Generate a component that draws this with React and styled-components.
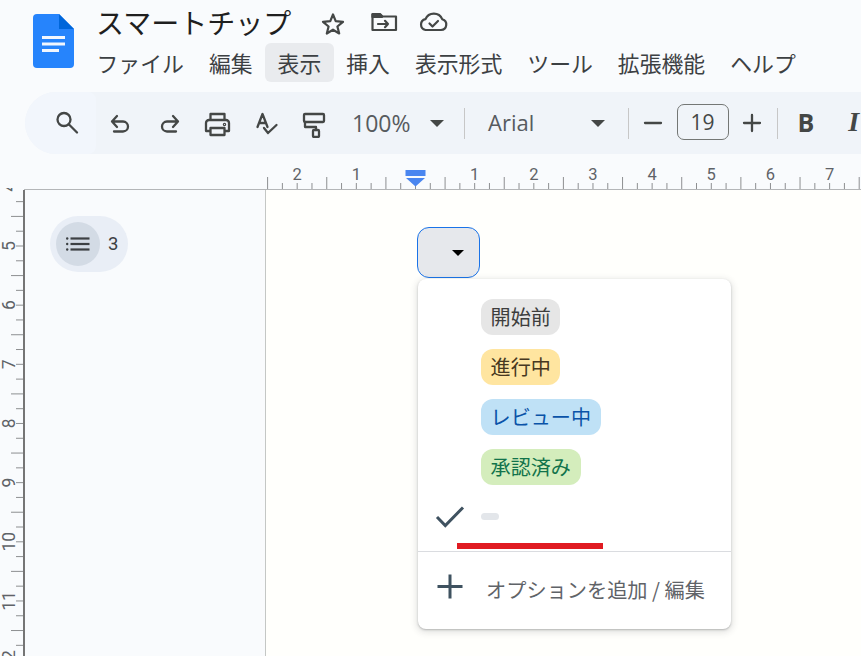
import React from "react";
import styled, { createGlobalStyle } from "styled-components";

const CJK = `"Noto Sans CJK JP", "Noto Sans", sans-serif`;
const UI = `"Open Sans", "Roboto", "Noto Sans", sans-serif`;

const Global = createGlobalStyle`
  html, body { margin: 0; padding: 0; background: #f9fbfd; }
  body { width: 861px; height: 656px; overflow: hidden; font-family: ${CJK}; }
`;

const Page = styled.div`
  width: 861px; height: 656px; overflow: hidden;
  display: flex; flex-direction: column; background: #f9fbfd;
`;
const Header = styled.header`
  height: 92px; flex: none; display: flex; padding-left: 33px;
`;
const Logo = styled.svg`
  width: 41px; height: 54px; margin-top: 14px; flex: none;
`;
const HeaderMain = styled.div`
  margin-left: 23px; display: flex; flex-direction: column;
`;
const TitleRow = styled.div`
  height: 43px; display: flex; align-items: center;
`;
const Title = styled.h1`
  margin: 0 0 0 -1px; font: 400 28px/40px ${CJK}; color: #1f1f1f; width: 222px; flex: none;
  white-space: nowrap;
`;
const TitleIcon = styled.svg`
  width: 30px; height: 30px; flex: none; margin-right: ${p => p.$gap}px;
  fill: none; stroke: #444746; stroke-width: 2.2; stroke-linejoin: round; stroke-linecap: round;
`;
const MenuBar = styled.nav`
  display: flex; height: 39px; margin-left: -13px;
`;
const MenuItem = styled.div`
  padding: 0 12.5px; border-radius: 6px; font: 400 21.85px/39px ${CJK}; color: #3c4043;
  background: ${p => (p.$active ? "#e9ebee" : "transparent")};
  white-space: nowrap;
`;
const Toolbar = styled.div`
  height: 62px; flex: none; margin-left: 25px;
  background: #f0f4f9; border-radius: 31px 0 0 31px;
  display: flex; align-items: center; overflow: hidden;
`;
const SearchBtn = styled.div`
  width: 71px; height: 62px; flex: none; display: flex; align-items: center; padding-left: 27px;
  box-sizing: border-box; background: #f2f6fc; border-radius: 31px 8px 8px 31px;
`;
const Tool = styled.svg`
  width: 30px; height: 30px; flex: none; margin-left: ${p => p.$ml ?? 19}px;
  fill: none; stroke: #444746; stroke-width: 2.3; stroke-linejoin: round; stroke-linecap: round;
`;
const ToolText = styled.span`
  font: 500 ${p => p.$size}px/30px ${UI}; color: #575b5f; flex: none; width: ${p => p.$width}px;
  margin-left: ${p => p.$ml}px; margin-bottom: ${p => p.$up}px; white-space: nowrap;
`;
const Caret = styled.i`
  flex: none; width: 0; height: 0; margin-left: ${p => p.$ml}px; margin-top: 1px;
  border-left: 7px solid transparent; border-right: 7px solid transparent;
  border-top: 7px solid #444746;
`;
const Sep = styled.i`
  flex: none; width: 1px; height: 31px; background: #c7c7c7; margin-left: ${p => p.$ml}px;
`;
const SizeBox = styled.div`
  flex: none; width: 52px; height: 36px; box-sizing: border-box; border: 1px solid #747775; border-radius: 7px;
  font: 400 21px/34px ${UI}; color: #444746; text-align: center; margin: 0 0 2px 9px;
`;
const BoldMark = styled.span`
  flex: none; font: 700 25px/30px ${UI}; color: #444746; margin: 0 0 2px ${p => p.$ml}px;
`;
const ItalicMark = styled(BoldMark)`
  font: italic 700 28px/30px "Liberation Serif", serif;
`;
const HRulerSvg = styled.svg`
  display: block; flex: none; width: 861px; height: 36px;
`;
const RulerNum = styled.text`
  font: 400 ${p => p.$size}px "Roboto", sans-serif; fill: #5f6368; text-anchor: middle;
`;
const Workspace = styled.div`
  flex: 1; display: flex; min-height: 0;
`;
const VRulerSvg = styled.svg`
  display: block; flex: none; width: 25px; height: 468px; margin-top: -2px; position: relative;
`;
const Sidebar = styled.aside`
  width: 241px; flex: none; box-sizing: border-box; border-right: 1px solid #c4c7c5;
  background: #f9fbfd; padding: 26px 0 0 25px;
`;
const OutlinePill = styled.div`
  width: 78px; height: 56px; box-sizing: border-box; border-radius: 28px; background: #e9eef6;
  display: flex; align-items: center; padding-left: 6px;
`;
const OutlineCircle = styled.div`
  width: 44px; height: 44px; border-radius: 50%; background: #d3dbe5;
  display: flex; align-items: center; justify-content: center; flex: none;
`;
const OutlineCount = styled.span`
  margin-left: 8px; font: 400 18.5px/20px "Roboto", sans-serif; color: #3c4043;
`;
const Doc = styled.main`
  flex: 1; background: #fffffc; padding: 37px 0 0 151px; position: relative;
`;
const DropChip = styled.div`
  width: 63px; height: 51px; box-sizing: border-box; border: 1px solid #1a73e8; border-radius: 12px;
  background: #e6e8ec; display: flex; align-items: center; justify-content: flex-end; padding-right: 15px;
`;
const ChipCaret = styled.i`
  width: 0; height: 0; border-left: 6px solid transparent; border-right: 6px solid transparent;
  border-top: 6px solid #000;
`;
const Menu = styled.div`
  position: absolute; left: 152px; top: 89px; width: 313px; height: 350px; box-sizing: border-box;
  background: #fff; border-radius: 8px; padding-top: 20px;
  box-shadow: 0 1px 2px rgba(60,64,67,.3), 0 2px 6px 2px rgba(60,64,67,.13);
`;
const OptionRow = styled.div`
  height: 50px; display: flex; align-items: flex-start; padding-left: 63px;
`;
const Chip = styled.span`
  height: 36px; padding: 0 9.6px; border-radius: 12px; font: 400 20.1px/36px ${CJK};
  background: ${p => p.$bg}; color: ${p => p.$fg}; white-space: nowrap;
`;
const CheckedRow = styled.div`
  height: 52px; display: flex; align-items: flex-start; padding-left: 17px;
`;
const EmptyChip = styled.i`
  width: 18px; height: 7px; border-radius: 4px; background: #e3e6ea; margin: 14px 0 0 16px;
`;
const RowIcon = styled.svg`
  width: 30px; height: 30px; flex: none; fill: none; stroke: #3f5260; stroke-width: 3;
`;
const Annotation = styled.i`
  position: absolute; left: 39px; top: 264px; width: 146px; height: 6px; background: #e01b22;
`;
const Divider = styled.hr`
  margin: 0; border: 0; height: 1px; background: #dadce0;
`;
const AddRow = styled.div`
  display: flex; align-items: center; height: 74px; padding-left: 17px;
`;
const AddText = styled.span`
  margin-left: 21px; margin-top: 1px; font: 400 20.2px/30px ${CJK}; color: #5f6368; white-space: nowrap;
`;

const hTicks = () => {
  const out = [];
  for (let k = -10; k <= 31; k++) {
    const x = 415.5 + k * 14.79;
    const long = ((k % 4) + 4) % 4 === 2;
    out.push(<line key={k} x1={x} x2={x} y1={long ? 23 : 29} y2={35} stroke="#8d8f91" strokeWidth="1" />);
  }
  return out;
};
const vTicks = () => {
  const out = [];
  for (let k = -3; k <= 30; k++) {
    const y = 56 + k * 14.79;
    const long = ((k % 4) + 4) % 4 === 2;
    out.push(<line key={k} x1={long ? 11 : 16} x2={23} y1={y} y2={y} stroke="#8d8f91" strokeWidth="1" />);
  }
  return out;
};

const HRuler = () => (
  <HRulerSvg viewBox="0 0 861 36">
    <line x1="24" x2="861" y1="35.5" y2="35.5" stroke="#b4b6b8" />
    {hTicks()}
    {[[-2, "2"], [-1, "1"], [1, "1"], [2, "2"], [3, "3"], [4, "4"], [5, "5"], [6, "6"], [7, "7"]].map(([n, t]) => (
      <RulerNum key={n} $size={16.5} x={415.5 + n * 59.15} y="26">{t}</RulerNum>
    ))}
    <rect x="405.5" y="16" width="20" height="6" fill="#4a86f0" />
    <path d="M406 24 H425 L415.5 32.5 Z" fill="#4a86f0" />
  </HRulerSvg>
);

const VRuler = () => (
  <VRulerSvg viewBox="0 -2 25 468">
    <line x1="24" x2="24" y1="0" y2="466" stroke="#757575" strokeWidth="2" />
    {vTicks()}
    {[4, 5, 6, 7, 8, 9, 10, 11, 12].map(n => {
      const y = 56 + (n - 5) * 59.15;
      return (
        <RulerNum key={n} $size={17.5} x="0" y="0" transform={`translate(15 ${y}) rotate(-90)`}>{n}</RulerNum>
      );
    })}
  </VRulerSvg>
);

export default function App() {
  return (
    <Page>
      <Global />
      <Header>
        <Logo viewBox="0 0 41 54">
          <path d="M4 0 H26 L41 15 V50 a4 4 0 0 1 -4 4 H4 a4 4 0 0 1 -4 -4 V4 a4 4 0 0 1 4 -4 Z" fill="#2684fc" />
          <path d="M26 0 L41 15 H26 Z" fill="#0066da" />
          <rect x="9" y="22" width="23" height="3" fill="#f1f6fe" />
          <rect x="9" y="28.5" width="23" height="3" fill="#f1f6fe" />
          <rect x="9" y="35" width="17" height="3" fill="#f1f6fe" />
        </Logo>
        <HeaderMain>
          <TitleRow>
            <Title>スマートチップ</Title>
            <TitleIcon viewBox="318 12 30 30" $gap={21}>
              <path d="M333 19.5 L335.7 26.2 L343 26.8 L337.4 31.5 L339.2 38.5 L333 34.7 L326.8 38.5 L328.6 31.5 L323 26.8 L330.3 26.2 Z" />
            </TitleIcon>
            <TitleIcon viewBox="369 12 30 30" $gap={19}>
              <path d="M372.5 19 H380 L382.5 21.5 H396 V35 H372.5 Z" />
              <path d="M372.5 19.5 H380 L382 22 H372.5 Z" fill="#444746" />
              <path d="M378 29 H388 M385 25.8 L388 29 L385 32.2" />
            </TitleIcon>
            <TitleIcon viewBox="418 12 30 30" $gap={0}>
              <path d="M425.5 35 H441 a5.5 5.5 0 0 0 1.2 -10.8 A9 9 0 0 0 425.5 24.2 A5.5 5.5 0 0 0 425.5 35 Z" />
              <path d="M429.5 28.5 L432.5 31.5 L438 26" />
            </TitleIcon>
          </TitleRow>
          <MenuBar>
            {["ファイル", "編集", "表示", "挿入", "表示形式", "ツール", "拡張機能", "ヘルプ"].map(m => (
              <MenuItem key={m} $active={m === "表示"}>{m}</MenuItem>
            ))}
          </MenuBar>
        </HeaderMain>
      </Header>
      <Toolbar>
        <SearchBtn>
          <Tool viewBox="52 107 30 30" $ml={0}>
            <circle cx="64" cy="118.5" r="6.5" />
            <path d="M69 123.5 L77 131.5" />
          </Tool>
        </SearchBtn>
        <Tool viewBox="105 109 30 30" $ml={9}>
          <path d="M117 117 L112 122.5 L117 128 M112 122.5 H123 a5 5 0 0 1 0 10 H114" />
        </Tool>
        <Tool viewBox="153 109 30 30" $ml={18}>
          <path d="M173 117 L178 122.5 L173 128 M178 122.5 H167 a5 5 0 0 0 0 10 H176" />
        </Tool>
        <Tool viewBox="202 107 30 30">
          <path d="M210.5 119 V113 H224.5 V119 M210.5 130 H206 V122 a3 3 0 0 1 3 -3 H226 a3 3 0 0 1 3 3 V130 H224.5 M210.5 127 H224.5 V134 H210.5 Z" />
          <circle cx="224.5" cy="123.5" r=".6" />
        </Tool>
        <Tool viewBox="251 107 30 30">
          <path d="M257.5 126 L262.5 113 L267.5 126 M259.3 122 H265.7 M264 127 L268 132 L276.5 124" />
        </Tool>
        <Tool viewBox="300 107 30 30">
          <rect x="304" y="113" width="20" height="8" rx="1" />
          <path d="M305 121 V126 H316 V129" />
          <rect x="313" y="129" width="6" height="7" rx="1" />
        </Tool>
        <ToolText $size={23} $width={70} $ml={22} $up={1}>100%</ToolText>
        <Caret $ml={7.5} />
        <Sep $ml={20} />
        <ToolText $size={22} $width={95} $ml={23.5} $up={3}>Arial</ToolText>
        <Caret $ml={7.5} />
        <Sep $ml={23} />
        <Tool viewBox="638 107 30 30" $ml={9}><path d="M645 122 H661" /></Tool>
        <SizeBox>19</SizeBox>
        <Tool viewBox="737 107 30 30" $ml={8}><path d="M744 122 H760 M752 114 V130" /></Tool>
        <Sep $ml={10} />
        <BoldMark $ml={20}>B</BoldMark>
        <ItalicMark $ml={34}>I</ItalicMark>
      </Toolbar>
      <HRuler />
      <Workspace>
        <VRuler />
        <Sidebar>
          <OutlinePill>
            <OutlineCircle>
              <svg width="26" height="26" viewBox="0 0 26 26" fill="#3c4043">
                <circle cx="2.2" cy="7.5" r="1.2" /><circle cx="2.2" cy="13" r="1.2" /><circle cx="2.2" cy="18.5" r="1.2" />
                <rect x="5.5" y="6.4" width="19" height="2.2" /><rect x="5.5" y="11.9" width="19" height="2.2" /><rect x="5.5" y="17.4" width="19" height="2.2" />
              </svg>
            </OutlineCircle>
            <OutlineCount>3</OutlineCount>
          </OutlinePill>
        </Sidebar>
        <Doc>
          <DropChip><ChipCaret /></DropChip>
          <Menu>
            <OptionRow><Chip $bg="#e6e6e6" $fg="#3d3d3d">開始前</Chip></OptionRow>
            <OptionRow><Chip $bg="#ffe5a0" $fg="#473821">進行中</Chip></OptionRow>
            <OptionRow><Chip $bg="#bfe1f6" $fg="#0a53a8">レビュー中</Chip></OptionRow>
            <OptionRow><Chip $bg="#d4edbc" $fg="#11734b">承認済み</Chip></OptionRow>
            <CheckedRow>
              <RowIcon viewBox="0 0 30 30"><path d="M2 18 L10.3 26.5 L28 8.5" /></RowIcon>
              <EmptyChip />
            </CheckedRow>
            <Annotation />
            <Divider />
            <AddRow>
              <RowIcon viewBox="0 0 30 30"><path d="M15 0.5 V24.5 M2.5 12.5 H27.5" /></RowIcon>
              <AddText>オプションを追加 / 編集</AddText>
            </AddRow>
          </Menu>
        </Doc>
      </Workspace>
    </Page>
  );
}
